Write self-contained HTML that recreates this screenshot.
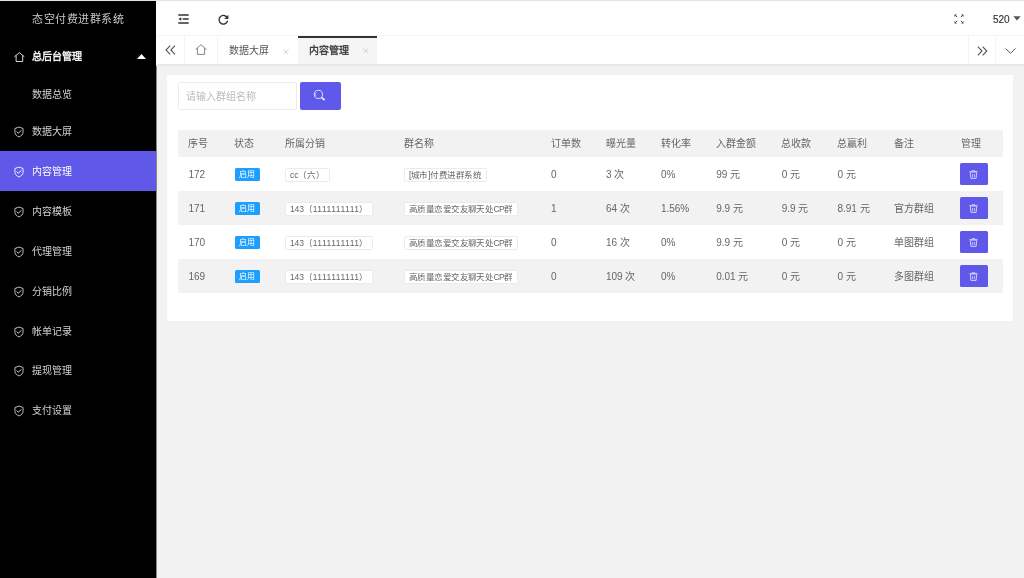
<!DOCTYPE html>
<html lang="zh-CN">
<head>
<meta charset="utf-8">
<style>
*{margin:0;padding:0;box-sizing:border-box;}
html,body{width:1024px;height:578px;overflow:hidden;background:#f2f2f2;font-family:"Liberation Sans",sans-serif;}
.abs{position:absolute;}
#topline{position:absolute;left:0;top:0;width:1024px;height:1px;background:#e2e2e2;}
#side{position:absolute;left:0;top:1px;width:156px;height:577px;background:#000;}
#side .title{position:absolute;left:0;top:11px;width:156px;text-align:center;color:#c8c8c8;font-size:11px;line-height:14px;letter-spacing:0.55px;padding-left:0.5px;}
.nav{position:absolute;left:0;width:156px;height:40px;color:#d2d2d2;font-size:10px;}
.nav .t{position:absolute;left:32px;top:1px;line-height:40px;}
.nav svg{position:absolute;left:14px;top:15px;}
.nav.on{background:#5f58e8;color:#fff;}
#header{position:absolute;left:156px;top:1px;width:868px;height:35px;background:#fff;border-bottom:1px solid #f4f4f4;}
#tabs{position:absolute;left:156px;top:36px;width:868px;height:30px;background:#fff;border-bottom:2px solid #e9e9e9;}
.tab{position:absolute;top:0;height:28px;color:#555;font-size:10px;line-height:28px;}
.tab span{top:1px!important;}
#card{position:absolute;left:167px;top:75px;width:846px;height:246px;background:#fff;}
#search{position:absolute;left:178px;top:82px;width:119px;height:28px;border:1px solid #ececec;border-radius:2px;background:#fff;color:#bbb;font-size:10px;line-height:28px;padding-left:7px;}
#sbtn{position:absolute;left:300px;top:82px;width:41px;height:28px;background:#5f58e8;border-radius:2px;}
table{position:absolute;left:178px;top:130px;width:824.5px;border-collapse:collapse;table-layout:fixed;color:#666;font-size:10px;line-height:14px;}
th{height:27px;background:#f2f2f2;font-weight:normal;text-align:left;padding-left:10.2px;padding-bottom:0px;color:#666;}
td{height:34.1px;padding-left:10.5px;padding-top:2px;white-space:nowrap;}
tr.g td{background:#f2f2f2;}
.badge{position:relative;top:-1px;display:inline-block;width:25.4px;height:12.5px;line-height:14.3px;background:#1e9fff;color:#fff;font-size:8px;text-align:center;border-radius:1.5px;vertical-align:middle;}
.rim{position:relative;top:-0.7px;font-kerning:none;letter-spacing:-0.4px;display:inline-block;height:14px;line-height:12px;border:1px solid #ebebeb;background:#fff;color:#666;font-size:8.5px;padding:0 4px;border-radius:1.5px;vertical-align:middle;}
.del{display:inline-block;width:28px;height:21.5px;background:#5f58e8;border-radius:1.5px;vertical-align:middle;position:relative;margin-left:-1px;top:-1.2px;}
.del svg{position:absolute;left:9.3px;top:6.5px;}
</style>
</head>
<body><div style="position:absolute;left:0;top:0;width:1024px;height:578px;will-change:transform;">
<div id="topline"></div>
<div id="side"><div style="position:absolute;left:156px;top:0;width:1px;height:577px;background:rgba(0,0,0,0.45)"></div>
  <div class="title">态空付费进群系统</div>
  <div class="nav" style="top:35px;color:#fff;">
    <svg width="11" height="11" viewBox="0 0 11 11"><path d="M0.5 5.7 L5.4 1.7 L10.3 5.7 M2.1 4.5 V10.5 H8.7 V4.5" fill="none" stroke="#fff" stroke-width="0.85"/></svg>
    <span class="t" style="top:1px;color:#fff;-webkit-text-stroke:0.35px #fff;">总后台管理</span>
    <svg style="left:137px;top:18px" width="9" height="5" viewBox="0 0 9 5"><path d="M0 5 L4.5 0 L9 5Z" fill="#fff"/></svg>
  </div>
  <div class="nav" style="top:73px;"><span class="t">数据总览</span></div>
  <div class="nav" style="top:110px;"><svg style="left:14.3px;top:14.5px" width="10" height="12" viewBox="0 0 10 12"><path d="M5 1.05 L9.05 2.5 V6.2 C9.05 8.5 7.2 10.1 5 10.95 C2.8 10.1 0.95 8.5 0.95 6.2 V2.5 Z" fill="none" stroke="#cfcfcf" stroke-width="0.9" stroke-linejoin="round"/><path d="M2.6 5.6 L4.2 7.2 L7.4 4.4" fill="none" stroke="#cfcfcf" stroke-width="1"/></svg><span class="t">数据大屏</span></div>
  <div class="nav on" style="top:150px;"><svg style="left:14.3px;top:14.5px" width="10" height="12" viewBox="0 0 10 12"><path d="M5 1.05 L9.05 2.5 V6.2 C9.05 8.5 7.2 10.1 5 10.95 C2.8 10.1 0.95 8.5 0.95 6.2 V2.5 Z" fill="none" stroke="#fff" stroke-width="0.9" stroke-linejoin="round"/><path d="M2.6 5.6 L4.2 7.2 L7.4 4.4" fill="none" stroke="#fff" stroke-width="1"/></svg><span class="t">内容管理</span></div>
  <div class="nav" style="top:190px;"><svg style="left:14.3px;top:14.5px" width="10" height="12" viewBox="0 0 10 12"><path d="M5 1.05 L9.05 2.5 V6.2 C9.05 8.5 7.2 10.1 5 10.95 C2.8 10.1 0.95 8.5 0.95 6.2 V2.5 Z" fill="none" stroke="#cfcfcf" stroke-width="0.9" stroke-linejoin="round"/><path d="M2.6 5.6 L4.2 7.2 L7.4 4.4" fill="none" stroke="#cfcfcf" stroke-width="1"/></svg><span class="t">内容模板</span></div>
  <div class="nav" style="top:230px;"><svg style="left:14.3px;top:14.5px" width="10" height="12" viewBox="0 0 10 12"><path d="M5 1.05 L9.05 2.5 V6.2 C9.05 8.5 7.2 10.1 5 10.95 C2.8 10.1 0.95 8.5 0.95 6.2 V2.5 Z" fill="none" stroke="#cfcfcf" stroke-width="0.9" stroke-linejoin="round"/><path d="M2.6 5.6 L4.2 7.2 L7.4 4.4" fill="none" stroke="#cfcfcf" stroke-width="1"/></svg><span class="t">代理管理</span></div>
  <div class="nav" style="top:270px;"><svg style="left:14.3px;top:14.5px" width="10" height="12" viewBox="0 0 10 12"><path d="M5 1.05 L9.05 2.5 V6.2 C9.05 8.5 7.2 10.1 5 10.95 C2.8 10.1 0.95 8.5 0.95 6.2 V2.5 Z" fill="none" stroke="#cfcfcf" stroke-width="0.9" stroke-linejoin="round"/><path d="M2.6 5.6 L4.2 7.2 L7.4 4.4" fill="none" stroke="#cfcfcf" stroke-width="1"/></svg><span class="t">分销比例</span></div>
  <div class="nav" style="top:310px;"><svg style="left:14.3px;top:14.5px" width="10" height="12" viewBox="0 0 10 12"><path d="M5 1.05 L9.05 2.5 V6.2 C9.05 8.5 7.2 10.1 5 10.95 C2.8 10.1 0.95 8.5 0.95 6.2 V2.5 Z" fill="none" stroke="#cfcfcf" stroke-width="0.9" stroke-linejoin="round"/><path d="M2.6 5.6 L4.2 7.2 L7.4 4.4" fill="none" stroke="#cfcfcf" stroke-width="1"/></svg><span class="t">帐单记录</span></div>
  <div class="nav" style="top:349px;"><svg style="left:14.3px;top:14.5px" width="10" height="12" viewBox="0 0 10 12"><path d="M5 1.05 L9.05 2.5 V6.2 C9.05 8.5 7.2 10.1 5 10.95 C2.8 10.1 0.95 8.5 0.95 6.2 V2.5 Z" fill="none" stroke="#cfcfcf" stroke-width="0.9" stroke-linejoin="round"/><path d="M2.6 5.6 L4.2 7.2 L7.4 4.4" fill="none" stroke="#cfcfcf" stroke-width="1"/></svg><span class="t">提现管理</span></div>
  <div class="nav" style="top:389px;"><svg style="left:14.3px;top:14.5px" width="10" height="12" viewBox="0 0 10 12"><path d="M5 1.05 L9.05 2.5 V6.2 C9.05 8.5 7.2 10.1 5 10.95 C2.8 10.1 0.95 8.5 0.95 6.2 V2.5 Z" fill="none" stroke="#cfcfcf" stroke-width="0.9" stroke-linejoin="round"/><path d="M2.6 5.6 L4.2 7.2 L7.4 4.4" fill="none" stroke="#cfcfcf" stroke-width="1"/></svg><span class="t">支付设置</span></div>
</div>

<div id="header">
  <svg class="abs" style="left:22px;top:13px" width="11" height="10" viewBox="0 0 11 10"><path d="M0.3 1 H10.7 M4.7 5 H10.7 M0.3 9 H10.7" stroke="#333" stroke-width="1.3"/><path d="M0.4 5 L3.3 3.2 V6.8Z" fill="#333"/></svg>
  <svg class="abs" style="left:62px;top:12.5px" width="11" height="11" viewBox="0 0 11 11"><path d="M9.1 3.6 A4.3 4.3 0 1 0 9.6 6.6" fill="none" stroke="#333" stroke-width="1.3"/><path d="M10.4 0.8 V5 H6.2Z" fill="#333"/></svg>
  <svg class="abs" style="left:798px;top:13px" width="10" height="10" viewBox="0 0 10 10"><path d="M1 1 L3.2 3.2 M9 1 L6.8 3.2 M1 9 L3.2 6.8 M9 9 L6.8 6.8" stroke="#444" stroke-width="1"/><path d="M0.5 0.5 H3 L0.5 3Z M9.5 0.5 H7 L9.5 3Z M0.5 9.5 H3 L0.5 7Z M9.5 9.5 H7 L9.5 7Z" fill="#444"/></svg>
  <span class="abs" style="left:837px;top:11.5px;font-size:10px;line-height:14px;color:#333;-webkit-text-stroke:0.15px #333;">520</span>
  <svg class="abs" style="left:857px;top:14.5px" width="8" height="5" viewBox="0 0 8 5"><path d="M0.3 0.2 H7.7 L4 4.4Z" fill="#555"/></svg>
</div>

<div id="tabs">
  <div class="tab" style="left:0;width:29px;border-right:1px solid #f4f4f4;">
    <svg class="abs" style="left:8.5px;top:9px" width="11" height="10" viewBox="0 0 11 10"><path d="M5.2 0.6 L1 5 L5.2 9.4 M10 0.6 L5.8 5 L10 9.4" fill="none" stroke="#555" stroke-width="1.1"/></svg>
  </div>
  <div class="tab" style="left:29px;width:33px;border-right:1px solid #f4f4f4;">
    <svg class="abs" style="left:10px;top:8px" width="12" height="11" viewBox="0 0 12 11"><path d="M0.5 5.6 L6 0.7 L11.5 5.6 M2.4 4.1 V10.4 H9.6 V4.1" fill="none" stroke="#777" stroke-width="0.9"/></svg>
  </div>
  <div class="tab" style="left:62px;width:79px;">
    <span class="abs" style="left:11px;top:0;">数据大屏</span>
    <svg class="abs" style="top:12.5px;left:65.3px" width="5.8" height="5.8" viewBox="0 0 6 6"><path d="M0.3 0.3 L5.7 5.7 M5.7 0.3 L0.3 5.7" stroke="#c4c4c4" stroke-width="0.8"/></svg>
  </div>
  <div class="tab" style="left:141.5px;width:79.5px;background:#f5f5f5;">
    <div class="abs" style="left:0;top:0;width:79.5px;height:2px;background:#333;"></div>
    <span class="abs" style="left:11px;top:0;color:#333;-webkit-text-stroke:0.3px #333;">内容管理</span>
    <svg class="abs" style="top:12.3px;left:65.6px" width="5.5" height="5.5" viewBox="0 0 6 6"><path d="M0.3 0.3 L5.7 5.7 M5.7 0.3 L0.3 5.7" stroke="#c4c4c4" stroke-width="0.8"/></svg>
  </div>
  <div class="tab" style="left:811.5px;width:28px;border-left:1px solid #f4f4f4;">
    <svg class="abs" style="left:8px;top:9.5px" width="11" height="10" viewBox="0 0 11 10"><path d="M0.8 0.6 L5 5 L0.8 9.4 M5.6 0.6 L9.8 5 L5.6 9.4" fill="none" stroke="#555" stroke-width="1.1"/></svg>
  </div>
  <div class="tab" style="left:839px;width:29px;border-left:1px solid #f4f4f4;">
    <svg class="abs" style="left:9px;top:11.5px" width="11" height="6" viewBox="0 0 11 6"><path d="M0.5 0.5 L5.5 5.3 L10.5 0.5" fill="none" stroke="#555" stroke-width="1"/></svg>
  </div>
</div>

<div id="card"></div>
<div id="search">请输入群组名称</div>
<div id="sbtn"><svg class="abs" style="left:13px;top:6px" width="14" height="13" viewBox="0 0 14 13"><circle cx="5.4" cy="6.4" r="4.1" fill="none" stroke="#f4f3ff" stroke-width="0.9"/><path d="M3.1 4.6 A2.7 2.7 0 0 0 3.1 8.2" fill="none" stroke="#f4f3ff" stroke-width="0.6"/><path d="M8.6 9.7 L11.6 12" stroke="#f4f3ff" stroke-width="1.6"/></svg></div>

<table>
<colgroup><col style="width:46px"><col style="width:50.4px"><col style="width:119px"><col style="width:147px"><col style="width:55px"><col style="width:55px"><col style="width:55.3px"><col style="width:65.6px"><col style="width:55.6px"><col style="width:56.9px"><col style="width:66.6px"><col></colgroup>
<tr><th>序号</th><th>状态</th><th>所属分销</th><th>群名称</th><th>订单数</th><th>曝光量</th><th>转化率</th><th>入群金额</th><th>总收款</th><th>总赢利</th><th>备注</th><th>管理</th></tr>
<tr><td>172</td><td><span class="badge">启用</span></td><td><span class="rim" style="letter-spacing:0">cc（六）</span></td><td><span class="rim">[城市]付费进群系统</span></td><td>0</td><td>3 次</td><td>0%</td><td>99 元</td><td>0 元</td><td>0 元</td><td></td><td><span class="del"><svg width="9" height="9" viewBox="0 0 10 10"><path d="M3.6 1.2 V0.4 H6.4 V1.2" fill="none" stroke="#e2e0ff" stroke-width="0.8"/><rect x="0.4" y="1.3" width="9.2" height="1.5" rx="0.5" fill="#e2e0ff"/><path d="M1.6 3.2 L2.1 9.3 H7.9 L8.4 3.2" fill="none" stroke="#e2e0ff" stroke-width="1"/><path d="M4 4.4 V8 M6 4.4 V8" stroke="#e2e0ff" stroke-width="0.8"/></svg></span></td></tr>
<tr class="g"><td>171</td><td><span class="badge">启用</span></td><td><span class="rim" style="letter-spacing:-0.1px">143（1111111111）</span></td><td><span class="rim" style="letter-spacing:-0.55px">高质量恋爱交友聊天处CP群</span></td><td>1</td><td>64 次</td><td>1.56%</td><td>9.9 元</td><td>9.9 元</td><td>8.91 元</td><td>官方群组</td><td><span class="del"><svg width="9" height="9" viewBox="0 0 10 10"><path d="M3.6 1.2 V0.4 H6.4 V1.2" fill="none" stroke="#e2e0ff" stroke-width="0.8"/><rect x="0.4" y="1.3" width="9.2" height="1.5" rx="0.5" fill="#e2e0ff"/><path d="M1.6 3.2 L2.1 9.3 H7.9 L8.4 3.2" fill="none" stroke="#e2e0ff" stroke-width="1"/><path d="M4 4.4 V8 M6 4.4 V8" stroke="#e2e0ff" stroke-width="0.8"/></svg></span></td></tr>
<tr><td>170</td><td><span class="badge">启用</span></td><td><span class="rim" style="letter-spacing:-0.1px">143（1111111111）</span></td><td><span class="rim" style="letter-spacing:-0.55px">高质量恋爱交友聊天处CP群</span></td><td>0</td><td>16 次</td><td>0%</td><td>9.9 元</td><td>0 元</td><td>0 元</td><td>单图群组</td><td><span class="del"><svg width="9" height="9" viewBox="0 0 10 10"><path d="M3.6 1.2 V0.4 H6.4 V1.2" fill="none" stroke="#e2e0ff" stroke-width="0.8"/><rect x="0.4" y="1.3" width="9.2" height="1.5" rx="0.5" fill="#e2e0ff"/><path d="M1.6 3.2 L2.1 9.3 H7.9 L8.4 3.2" fill="none" stroke="#e2e0ff" stroke-width="1"/><path d="M4 4.4 V8 M6 4.4 V8" stroke="#e2e0ff" stroke-width="0.8"/></svg></span></td></tr>
<tr class="g"><td>169</td><td><span class="badge">启用</span></td><td><span class="rim" style="letter-spacing:-0.1px">143（1111111111）</span></td><td><span class="rim" style="letter-spacing:-0.55px">高质量恋爱交友聊天处CP群</span></td><td>0</td><td>109 次</td><td>0%</td><td>0.01 元</td><td>0 元</td><td>0 元</td><td>多图群组</td><td><span class="del"><svg width="9" height="9" viewBox="0 0 10 10"><path d="M3.6 1.2 V0.4 H6.4 V1.2" fill="none" stroke="#e2e0ff" stroke-width="0.8"/><rect x="0.4" y="1.3" width="9.2" height="1.5" rx="0.5" fill="#e2e0ff"/><path d="M1.6 3.2 L2.1 9.3 H7.9 L8.4 3.2" fill="none" stroke="#e2e0ff" stroke-width="1"/><path d="M4 4.4 V8 M6 4.4 V8" stroke="#e2e0ff" stroke-width="0.8"/></svg></span></td></tr>
</table>
</div></body>
</html>
